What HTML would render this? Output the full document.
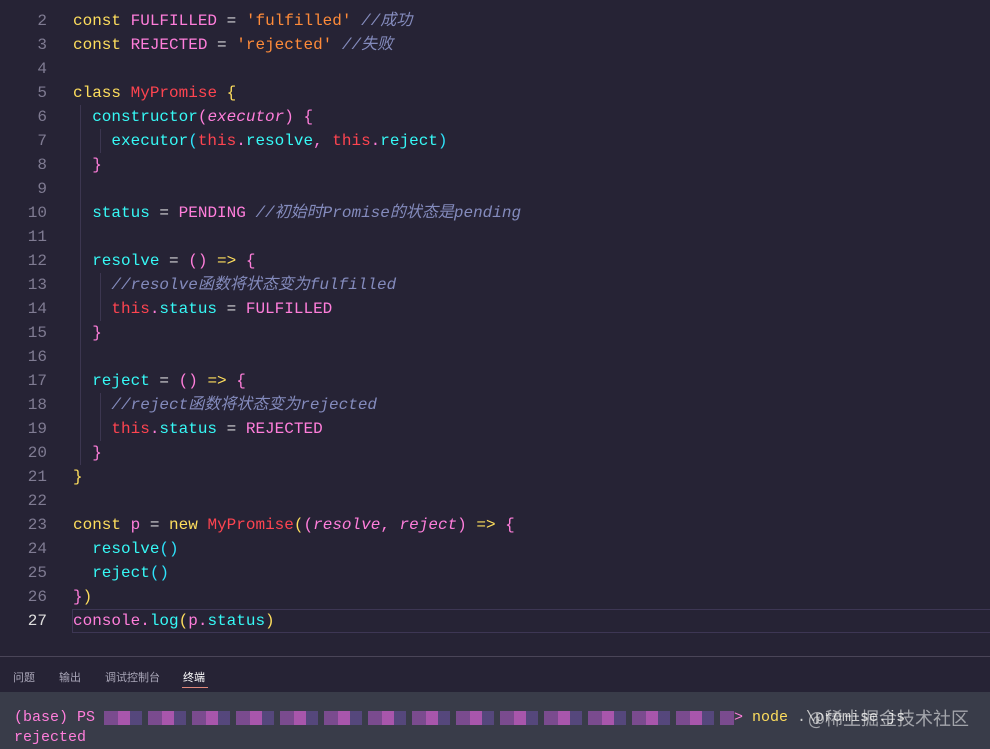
<!DOCTYPE html>
<html><head><meta charset="utf-8"><style>
body{margin:0;width:990px;height:748px;background:#262335;overflow:hidden;position:relative;font-family:"Liberation Mono","Noto Sans CJK SC",monospace;font-size:16px}
.ed{position:absolute;top:9px;left:0;width:990px}
.l{height:24px;line-height:24px;white-space:pre;position:relative}
.n{position:absolute;left:0;width:47px;text-align:right;color:#7f7b92}
.c{position:absolute;left:73px;color:#ff7edb}
.k{color:#fede5d}.p{color:#ff7edb}.s{color:#ff8b39}.cm{color:#848bbd;font-style:italic}.r{color:#fe4450}.f{color:#36f9f6}.i{color:#ff7edb;font-style:italic}.y{color:#fede5d}.w{color:#ffffffcc}.b{color:#2ee2fa}
.cur{position:absolute;left:72px;top:609px;width:918px;height:22px;border:1px solid #3d3654;border-right:none}
.g{position:absolute;width:1px;background:#3c3650}
.panel{position:absolute;top:656px;left:0;width:990px;height:92px;border-top:1px solid #4a4558}
.tabs{position:absolute;top:12px;font-family:"Liberation Sans","Noto Sans CJK SC",sans-serif;font-size:11px;color:#a9a6b8}
.term{position:absolute;top:35px;left:0;width:990px;height:57px;background:#393c49;font-size:15px}
</style></head><body>
<div class="g" style="left:80px;top:105px;height:360px"></div>
<div class="g" style="left:100px;top:129px;height:24px"></div>
<div class="g" style="left:100px;top:273px;height:48px"></div>
<div class="g" style="left:100px;top:393px;height:48px"></div>
<div class="cur"></div>
<div class="ed">
<div class="l"><span class="n">2</span><span class="c"><span class="k">const</span> FULFILLED <span class="w">=</span> <span class="s">'fulfilled'</span> <span class="cm">//成功</span></span></div>
<div class="l"><span class="n">3</span><span class="c"><span class="k">const</span> REJECTED <span class="w">=</span> <span class="s">'rejected'</span> <span class="cm">//失败</span></span></div>
<div class="l"><span class="n">4</span></div>
<div class="l"><span class="n">5</span><span class="c"><span class="k">class</span> <span class="r">MyPromise</span> <span class="y">{</span></span></div>
<div class="l"><span class="n">6</span><span class="c">  <span class="f">constructor</span>(<span class="i">executor</span>) {</span></div>
<div class="l"><span class="n">7</span><span class="c">    <span class="f">executor</span><span class="b">(</span><span class="r">this</span>.<span class="f">resolve</span>, <span class="r">this</span>.<span class="f">reject</span><span class="b">)</span></span></div>
<div class="l"><span class="n">8</span><span class="c">  }</span></div>
<div class="l"><span class="n">9</span></div>
<div class="l"><span class="n">10</span><span class="c">  <span class="f">status</span> <span class="w">=</span> PENDING <span class="cm">//初始时Promise的状态是pending</span></span></div>
<div class="l"><span class="n">11</span></div>
<div class="l"><span class="n">12</span><span class="c">  <span class="f">resolve</span> <span class="w">=</span> () <span class="y">=&gt;</span> {</span></div>
<div class="l"><span class="n">13</span><span class="c">    <span class="cm">//resolve函数将状态变为fulfilled</span></span></div>
<div class="l"><span class="n">14</span><span class="c">    <span class="r">this</span>.<span class="f">status</span> <span class="w">=</span> FULFILLED</span></div>
<div class="l"><span class="n">15</span><span class="c">  }</span></div>
<div class="l"><span class="n">16</span></div>
<div class="l"><span class="n">17</span><span class="c">  <span class="f">reject</span> <span class="w">=</span> () <span class="y">=&gt;</span> {</span></div>
<div class="l"><span class="n">18</span><span class="c">    <span class="cm">//reject函数将状态变为rejected</span></span></div>
<div class="l"><span class="n">19</span><span class="c">    <span class="r">this</span>.<span class="f">status</span> <span class="w">=</span> REJECTED</span></div>
<div class="l"><span class="n">20</span><span class="c">  }</span></div>
<div class="l"><span class="n">21</span><span class="c"><span class="y">}</span></span></div>
<div class="l"><span class="n">22</span></div>
<div class="l"><span class="n">23</span><span class="c"><span class="k">const</span> p <span class="w">=</span> <span class="k">new</span> <span class="r">MyPromise</span><span class="y">(</span>(<span class="i">resolve</span>, <span class="i">reject</span>) <span class="y">=&gt;</span> {</span></div>
<div class="l"><span class="n">24</span><span class="c">  <span class="f">resolve</span><span class="b">()</span></span></div>
<div class="l"><span class="n">25</span><span class="c">  <span class="f">reject</span><span class="b">()</span></span></div>
<div class="l"><span class="n">26</span><span class="c">}<span class="y">)</span></span></div>
<div class="l"><span class="n" style="color:#ddd">27</span><span class="c">console.<span class="f">log</span><span class="y">(</span>p.<span class="f">status</span><span class="y">)</span></span></div>
</div>
<div class="panel">
<span class="tabs" style="left:13px">问题</span>
<span class="tabs" style="left:59px">输出</span>
<span class="tabs" style="left:105px">调试控制台</span>
<span class="tabs" style="left:183px;color:#fff">终端</span>
<div style="position:absolute;left:182px;top:30px;width:26px;height:1px;background:#e0887a"></div>
<div class="term">
<div style="position:absolute;left:14px;top:17px;color:#ff7edb">(base) PS</div>
<div style="position:absolute;left:104px;top:19px;width:630px;height:14px;background:repeating-linear-gradient(90deg,#8a4fa0 0 14px,#c45cc4 14px 26px,#5c4a88 26px 38px,#393c49 38px 44px);opacity:.8"></div>
<div style="position:absolute;left:734px;top:17px;color:#ff7edb">&gt; <span style="color:#fede5d">node</span> <span style="color:#ccc">.\promise.js</span></div>
<div style="position:absolute;left:808px;top:13px;color:#ffffff88;font-family:'Noto Sans CJK SC',sans-serif;font-size:18px">@稀土掘金技术社区</div>
<div style="position:absolute;left:14px;top:37px;color:#ff7edb">rejected</div>
</div>
</div>
</body></html>
